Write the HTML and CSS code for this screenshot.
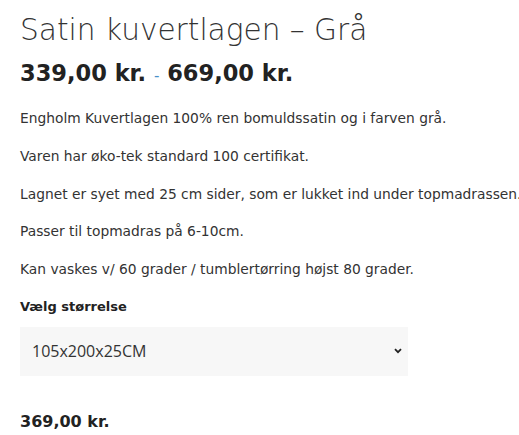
FILE: index.html
```html
<!DOCTYPE html>
<html lang="da">
<head>
<meta charset="utf-8">
<link rel="stylesheet" href="styles.css">
</head>
<body>
<div class="product">
  <h1 class="title">Satin kuvertlagen – Grå</h1>
  <p class="price-range"><span>339,00 kr.</span> <span class="sep">-</span> <span>669,00 kr.</span></p>
  <div class="desc">
    <p>Engholm Kuvertlagen 100% ren bomuldssatin og i farven grå.</p>
    <p>Varen har øko-tek standard 100 certifikat.</p>
    <p>Lagnet er syet med 25 cm sider, som er lukket ind under topmadrassen.</p>
    <p>Passer til topmadras på 6-10cm.</p>
    <p>Kan vaskes v/ 60 grader / tumblertørring højst 80 grader.</p>
  </div>
  <div class="variation">
    <div class="label">Vælg størrelse</div>
    <div class="select">
      <span class="select-value">105x200x25CM</span>
      <svg class="chev" width="8" height="6" viewBox="0 0 8 6"><path d="M1 1.2 L4 4.2 L7 1.2" fill="none" stroke="#222" stroke-width="1.8"/></svg>
    </div>
  </div>
  <div class="variant-price">369,00 kr.</div>
</div>
</body>
</html>
```
FILE: styles.css
```css
html, body { margin: 0; padding: 0; background: #fff; overflow: hidden; }
body { width: 519px; height: 435px; }
.product {
  padding: 0 0 0 20px;
  font-family: "DejaVu Sans", sans-serif;
  color: #222;
  width: 499px;
  overflow: hidden;
}
.title {
  margin: 0;
  padding-top: 13px;
  font-weight: 300;
  font-size: 29.6px;
  line-height: 34px;
  color: #333;
  white-space: nowrap;
}
.price-range {
  margin: 11px 0 0;
  font-size: 22.5px;
  font-weight: 700;
  line-height: 30px;
  color: #222;
  white-space: nowrap;
}
.price-range .sep { color: #4a90c8; font-weight: 400; font-size: 15px; }
.desc { margin-top: 18px; }
.desc p {
  margin: 0 0 19.8px;
  font-size: 13.8px;
  line-height: 18px;
  white-space: nowrap;
  color: #333;
}
.label { font-size: 13px; font-weight: 700; line-height: 18px; color: #222; }
.select {
  margin-top: 11px;
  width: 388px;
  height: 49px;
  background: #f7f7f7;
  display: flex;
  align-items: center;
  justify-content: space-between;
  padding: 0 6px 0 12px;
  box-sizing: border-box;
}
.select-value { font-family: "Open Sans", sans-serif; font-size: 16px; color: #333; }
.variant-price { margin-top: 36px; font-size: 16px; line-height: 20px; font-weight: 700; color: #222; }
```
